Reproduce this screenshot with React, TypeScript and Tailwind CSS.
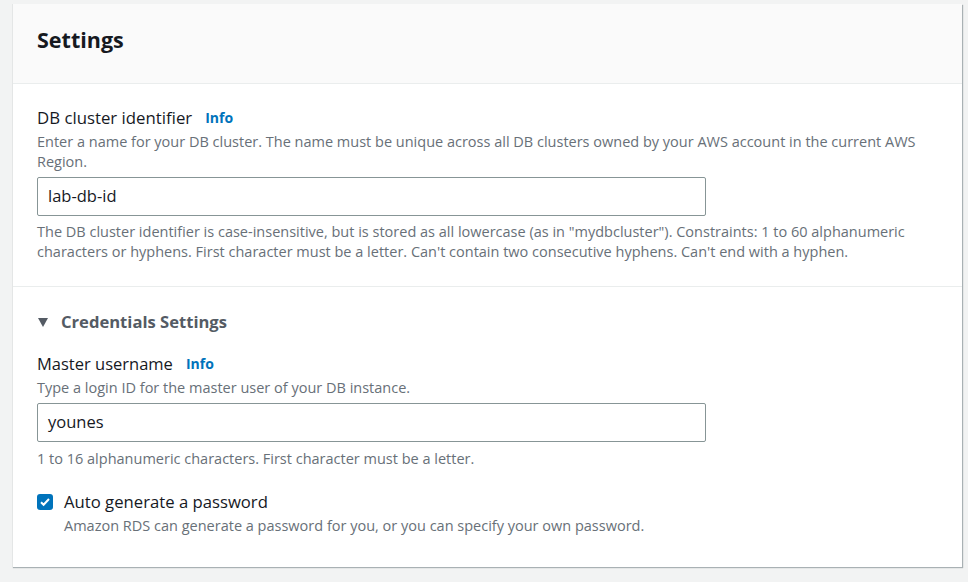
import React from 'react';

function InfoLink() {
  return <span className="ml-[13px] text-[14px] font-bold text-[#0073bb]">Info</span>;
}

function TextField({ value }: { value: string }) {
  return (
    <div className="mt-[5px] flex h-[39px] w-[669px] items-center rounded-[2px] border border-[#879596] bg-white px-[10px] text-[16.5px] text-[#16191f]">
      {value}
    </div>
  );
}

export default function App() {
  return (
    <div className="h-[582px] w-[968px] bg-[#f2f3f3] pl-[12px] pr-[6px] pt-[4px] font-['Open_Sans',sans-serif]">
      <div className="h-[563px] w-[950px] border-l border-[#e4e6e6] bg-white shadow-[1px_1px_1px_0_rgba(0,28,36,0.3)]">
        <div className="flex h-[80px] items-center border-b border-[#eaeded] bg-[#fafafa] px-[24px] pb-[6px]">
          <h2 className="text-[21.5px] font-bold text-[#16191f]">Settings</h2>
        </div>

        <div className="border-b border-[#eaeded] px-[24px] pb-[24px] pt-[23px]">
          <div className="flex items-center text-[16.8px] leading-[22px] text-[#16191f]">
            DB cluster identifier
            <InfoLink />
          </div>
          <p className="mt-[3px] text-[14.5px] leading-[20px] text-[#687078]">
            Enter a name for your DB cluster. The name must be unique across all DB clusters owned by your AWS account in the current AWS Region.
          </p>
          <TextField value="lab-db-id" />
          <p className="mt-[6px] text-[14.5px] leading-[20px] text-[#687078]">
            The DB cluster identifier is case-insensitive, but is stored as all lowercase (as in "mydbcluster"). Constraints: 1 to 60 alphanumeric characters or hyphens. First character must be a letter. Can't contain two consecutive hyphens. Can't end with a hyphen.
          </p>
        </div>

        <div className="px-[24px] pt-[23px]">
          <div className="flex items-center text-[16.6px] font-bold leading-[24px] text-[#545b64]">
            <svg width="10" height="9" viewBox="0 0 10 9" className="ml-[1px] mr-[13px]">
              <path d="M0 0h10L5 9z" fill="#545b64" />
            </svg>
            Credentials Settings
          </div>

          <div className="mt-[19px] flex items-center text-[16.5px] leading-[22px] text-[#16191f]">
            Master username
            <InfoLink />
          </div>
          <p className="mt-[3px] text-[14.5px] leading-[20px] text-[#687078]">
            Type a login ID for the master user of your DB instance.
          </p>
          <TextField value="younes" />
          <p className="mt-[7px] text-[14.5px] leading-[20px] text-[#687078]">
            1 to 16 alphanumeric characters. First character must be a letter.
          </p>

          <div className="mt-[22px] flex items-start">
            <span className="mt-[3px] flex h-[16px] w-[16px] shrink-0 items-center justify-center rounded-[3px] bg-[#0073bb]">
              <svg width="12" height="12" viewBox="0 0 12 12">
                <path d="M2 6.2l2.6 2.6L10 3" fill="none" stroke="#fff" strokeWidth="2" />
              </svg>
            </span>
            <div className="ml-[11px]">
              <div className="text-[16.7px] leading-[22px] text-[#16191f]">Auto generate a password</div>
              <p className="mt-[3px] text-[14.5px] leading-[20px] text-[#687078]">
                Amazon RDS can generate a password for you, or you can specify your own password.
              </p>
            </div>
          </div>
        </div>
      </div>
    </div>
  );
}
